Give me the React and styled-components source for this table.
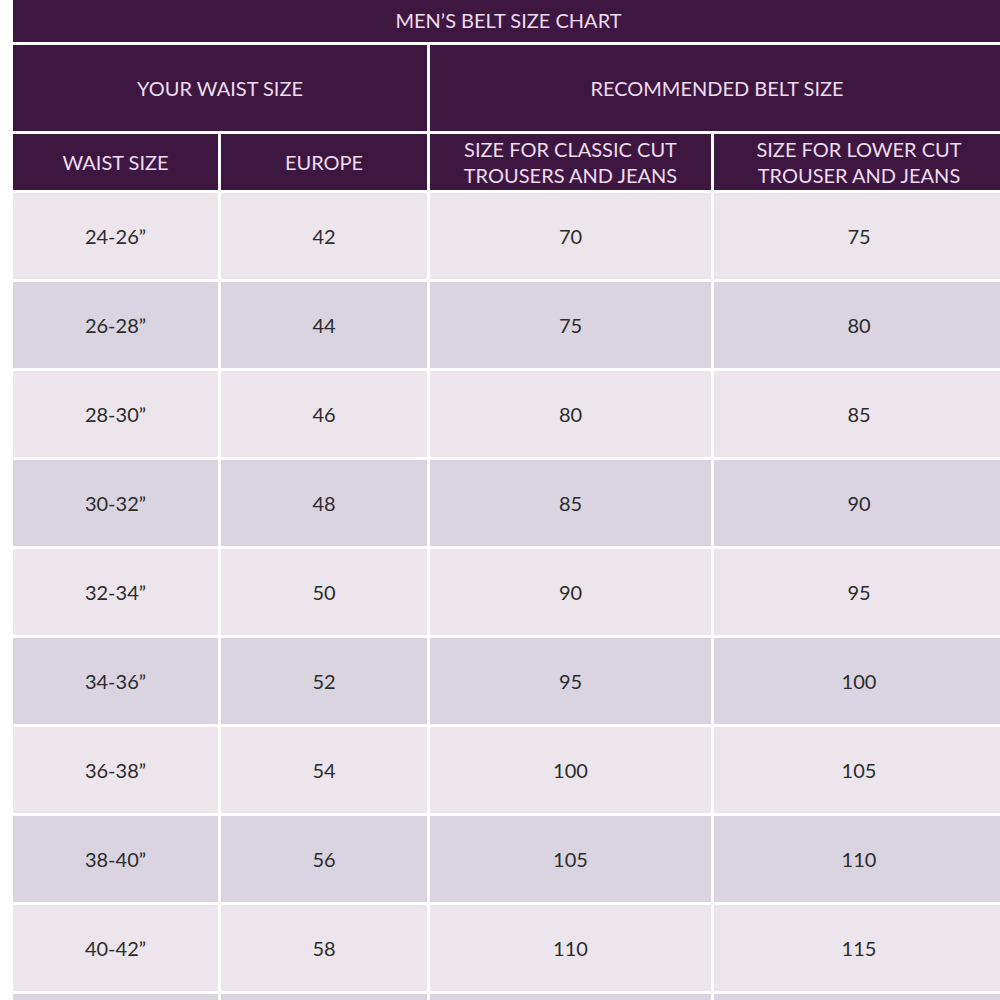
import React from 'react';
import styled, { createGlobalStyle } from 'styled-components';

const GlobalStyle = createGlobalStyle`
    body {
        margin: 0;
        background: #ffffff;
        font-family: Lato, "Open Sans", sans-serif;
    }
`;

const Page = styled.div`
    width: 1000px;
    height: 1000px;
    overflow: hidden;
    padding-left: 13px;
    box-sizing: border-box;
`;

const Chart = styled.div`
    display: grid;
    grid-template-columns: 205px 206px 281px 290px;
    grid-template-rows: 45px 86px 56px;
    grid-auto-rows: 86px;
    gap: 3px;
    margin-top: -3px;
    background: #ffffff;
`;

const HeadCell = styled.div`
    grid-column: ${(p) => p.span || 'auto'};
    background: #3d1740;
    color: #eedcf0;
    font-size: 20px;
    line-height: 26px;
    display: flex;
    align-items: center;
    justify-content: center;
    text-align: center;
`;

const Cell = styled.div`
    background: ${(p) => (p.shade ? '#d9d4e0' : '#ece6ec')};
    color: #2b2b2b;
    font-size: 20px;
    display: flex;
    align-items: center;
    justify-content: center;
`;

const rows = [
    ['24-26\u201D', '42', '70', '75'],
    ['26-28\u201D', '44', '75', '80'],
    ['28-30\u201D', '46', '80', '85'],
    ['30-32\u201D', '48', '85', '90'],
    ['32-34\u201D', '50', '90', '95'],
    ['34-36\u201D', '52', '95', '100'],
    ['36-38\u201D', '54', '100', '105'],
    ['38-40\u201D', '56', '105', '110'],
    ['40-42\u201D', '58', '110', '115'],
    ['', '', '', ''],
];

const App = () => {
    return (
        <Page>
            <GlobalStyle />
            <Chart>
                <HeadCell span="1 / -1">MEN’S BELT SIZE CHART</HeadCell>
                <HeadCell span="1 / 3">YOUR WAIST SIZE</HeadCell>
                <HeadCell span="3 / 5">RECOMMENDED BELT SIZE</HeadCell>
                <HeadCell>WAIST SIZE</HeadCell>
                <HeadCell>EUROPE</HeadCell>
                <HeadCell>SIZE FOR CLASSIC CUT<br />TROUSERS AND JEANS</HeadCell>
                <HeadCell>SIZE FOR LOWER CUT<br />TROUSER AND JEANS</HeadCell>
                {rows.map((row, i) =>
                    row.map((value, j) => (
                        <Cell key={`${i}-${j}`} shade={i % 2 === 1}>
                            {value}
                        </Cell>
                    ))
                )}
            </Chart>
        </Page>
    );
};

export default App;
